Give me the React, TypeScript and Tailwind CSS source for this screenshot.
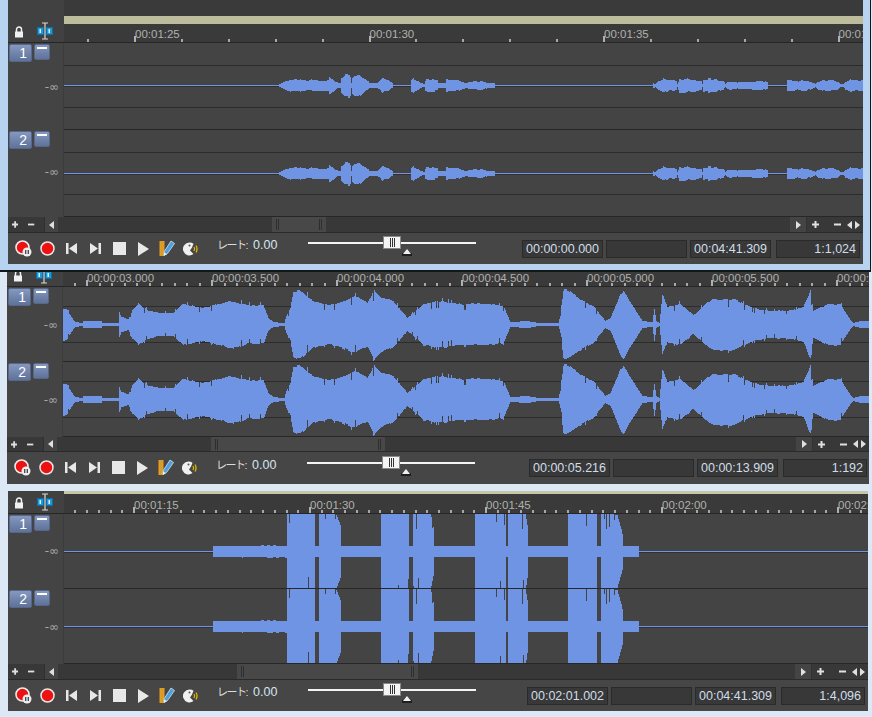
import React from "react";

type Pt = [number, number];
const BLUE = "#6f94e3";

const P1: Pt[] = [[278,0.5],[281,2],[285,4],[290,5.5],[300,5.5],[303,4],[308,4.5],[312,5],[320,4.5],[328,4.5],[329,8],[331,7],[335,3.5],[338,2],[340,2],[341,7],[345,11],[349,11],[350,9],[351,2],[352,8],[355,10],[360,9],[368,3.5],[369,2],[377,2],[378,3],[382,6],[388,5],[392,2],[393,0.5],[410,0.5],[411,5],[413,6],[418,3.5],[421,2],[424,1],[425,5],[430,5.5],[437,4.5],[438,2],[445,2],[446,7],[448,5],[458,4.5],[463,3],[467,2],[468,3],[475,3.5],[482,3.5],[487,2],[494,2],[495,0.5],
[652,0.5],[653,2],[655,1],[657,3.5],[663,6],[670,4.5],[676,4.5],[677,1],[679,6],[684,6],[695,5],[701,4.5],[702,1],[703,6],[708,6],[716,5],[723,3.5],[725,1],[727,3.5],[733,3.5],[737,2],[738,3],[749,3],[752,3.5],[760,4.5],[767,3],[768,0.5],[786,0.5],[787,4.5],[794,4.5],[797,3.5],[800,5],[806,4.5],[811,3],[815,1],[817,3],[822,5],[832,4.5],[838,3],[840,1],[843,1],[845,3.5],[850,5],[863,4.5]];
const P2: Pt[] = [[63,16],[66,15],[70,9],[73,4],[75,2],[82,1],[83,3],[101,3],[102,1],[118,1],[119,12],[121,7],[128,5],[132,14],[138,20],[147,14],[160,11],[173,11],[182,20],[193,18],[203,16],[217,20],[233,23],[247,19],[263,19],[268,6],[273,2],[284,1],[286,8],[290,16],[293,32],[300,34],[313,23],[327,19],[340,22],[353,28],[367,22],[374,34],[380,27],[393,23],[407,6],[423,20],[440,23],[460,20],[487,20],[503,18],[510,2],[527,3],[538,1],[558,1],[560,8],[563,34],[568,34],[580,25],[593,18],[605,3],[610,6],[620,30],[623,34],[630,22],[642,3],[652,2],[654,16],[656,3],[659,1],[662,30],[667,17],[680,20],[693,9],[707,22],[713,25],[733,25],[753,16],[770,13],[793,14],[803,17],[810,34],[813,13],[827,20],[840,20],[850,4],[853,1],[860,3],[869,3]];
const P3: Pt[] = [[213,5],[286,5.5],[287,39],[314,39],[315,5],[318,5],[319,39],[335,39],[340,26],[341,5],[380,5],[381,39],[408,39],[409,5],[412,5],[413,39],[430,39],[433,24],[434,5],[474,5],[475,39],[505,39],[506,5],[507,5],[508,39],[525,39],[527,26],[528,5],[567,5],[568,39],[596,39],[597,5],[600,5],[601,39],[617,36],[622,18],[623,5],[638,5]];

function ampAt(pts: Pt[], x: number) {
  if (x < pts[0][0] || x > pts[pts.length - 1][0]) return 0;
  for (let i = 1; i < pts.length; i++) {
    const [x0, a0] = pts[i - 1];
    const [x1, a1] = pts[i];
    if (x <= x1) return a0 + ((a1 - a0) * (x - x0)) / Math.max(1, x1 - x0);
  }
  return 0;
}

function wavePath(pts: Pt[], c: number, x0: number, x1: number, mode: number) {
  let seed = 7919;
  const rnd = () => {
    seed = (seed * 16807) % 2147483647;
    return seed / 2147483647;
  };
  let d = "";
  let hold1 = 0.5, hold2 = 0.5;
  for (let x = x0; x < x1; x++) {
    const a = ampAt(pts, x);
    const r1 = rnd(), r2 = rnd(), r3 = rnd();
    if (x % 3 === 0) { hold1 = r1; hold2 = r2; }
    if (a <= 0.6) continue;
    let up = a, dn = a;
    if (mode === 1) {
      up = a * (0.85 + 0.3 * hold1);
      dn = a * (0.85 + 0.3 * hold2);
    } else if (mode === 2) {
      up = a * (0.96 + 0.07 * hold1);
      dn = a * (0.96 + 0.07 * hold2);
      if (a > 9 && r3 < 0.045) { up = a * 0.7; dn = a * 1.12; }
      else if (a > 9 && r3 > 0.955) { up = a * 1.14; dn = a * 0.72; }
    } else {
      up = a > 20 ? a : a * (0.94 + 0.12 * hold1);
      dn = a > 20 ? a : a * (0.94 + 0.12 * hold2);
      if (a > 20 && r3 < 0.07) up = a * (0.55 + 0.3 * r1);
      if (a > 20 && r3 > 0.96) dn = a * (0.6 + 0.3 * r2);
    }
    d += `M${x + 0.5} ${Math.round(c - up)}V${Math.round(c + dn) + 1}`;
  }
  return d;
}

function Lock() {
  return (
    <svg width="10" height="12" viewBox="0 0 10 12">
      <path d="M2.5 6V3.5a2.5 2.5 0 0 1 5 0V6" fill="none" stroke="#f0f0f0" strokeWidth="1.5" />
      <rect x="1" y="5.5" width="8" height="6" fill="#f0f0f0" />
    </svg>
  );
}

function IBeam() {
  return (
    <svg width="16" height="18" viewBox="0 0 16 18">
      <rect x="0.5" y="5.5" width="6" height="7" fill="#1d9ad6" stroke="#0d6ea8" />
      <rect x="9.5" y="5.5" width="6" height="7" fill="#1d9ad6" stroke="#0d6ea8" />
      <rect x="2.5" y="7" width="1.5" height="4" fill="#d8f0ff" />
      <rect x="11.5" y="7" width="1.5" height="4" fill="#d8f0ff" />
      <path d="M5 1h6M5 17h6M8 1v16" fill="none" stroke="#d8d8d8" strokeWidth="1.2" />
    </svg>
  );
}

function Transport() {
  return (
    <>
      <div className="flex w-[24px] justify-center">
        <svg width="17" height="17" viewBox="0 0 17 17">
          <circle cx="7.5" cy="7.5" r="6.5" fill="#ee1111" stroke="#eeeeee" strokeWidth="1.6" />
          <circle cx="12" cy="12" r="4.5" fill="#eeeeee" />
          <path d="M10.7 10v4M13.3 10v4" stroke="#444" strokeWidth="1.3" />
        </svg>
      </div>
      <div className="flex w-[24px] justify-center">
        <svg width="15" height="15" viewBox="0 0 15 15">
          <circle cx="7.5" cy="7.5" r="6.5" fill="#ee1111" stroke="#e8e8e8" strokeWidth="1.5" />
        </svg>
      </div>
      <div className="flex w-[24px] justify-center">
        <svg width="11" height="11" viewBox="0 0 11 11">
          <rect width="2.5" height="11" fill="#e8e8e8" />
          <path d="M11 0v11L3 5.5z" fill="#e8e8e8" />
        </svg>
      </div>
      <div className="flex w-[24px] justify-center">
        <svg width="11" height="11" viewBox="0 0 11 11">
          <rect x="8.5" width="2.5" height="11" fill="#e8e8e8" />
          <path d="M0 0v11L8 5.5z" fill="#e8e8e8" />
        </svg>
      </div>
      <div className="flex w-[24px] justify-center">
        <div className="h-[13px] w-[13px] bg-[#e8e8e8]" />
      </div>
      <div className="flex w-[24px] justify-center">
        <svg width="12" height="14" viewBox="0 0 12 14">
          <path d="M1 0v14L12 7z" fill="#e8e8e8" />
        </svg>
      </div>
      <div className="flex w-[24px] justify-center">
        <svg width="16" height="17" viewBox="0 0 16 17">
          <path d="M0.5 1h2v15h-2zM3.5 1h2v15h-2z" fill="#f09a18" />
          <path d="M2.5 1h1v15h-1z" fill="#f6d040" />
          <path d="M12 1l3.5 2.5-7 10-3.5 2 .3-4z" fill="#4f9fdc" stroke="#d0e8f8" strokeWidth="0.8" />
          <path d="M5 15.5l.3-3 2.6 1.8z" fill="#f4f4f4" />
        </svg>
      </div>
      <div className="flex w-[24px] justify-center">
        <svg width="16" height="14" viewBox="0 0 16 14">
          <path d="M6.5 0.5a6.5 6.5 0 1 0 4 11.6L7 8.5 9 5.5 10.5 1.8A6.5 6.5 0 0 0 6.5 0.5z" fill="#f0f0f0" />
          <circle cx="6.5" cy="3.5" r="1" fill="#555" />
          <path d="M11 5c.8 1.2.8 2.8 0 4M13 3.5c1.2 2 1.2 5 0 7" fill="none" stroke="#e0b800" strokeWidth="1.3" />
        </svg>
      </div>
    </>
  );
}

type TrackCfg = { n: string; h: string; mt: string };
type PanelCfg = {
  left: number;
  width: string;
  top: number;
  headerH: string;
  topArea: React.ReactNode;
  rulerH: number;
  rulerStart: number;
  major: number;
  minors: number;
  labels: string[];
  tracks: { cfg: TrackCfg; y: number; h: number; c: number; lines: number[] }[];
  pts: Pt[];
  mode: number;
  thumbMl: string;
  thumbW: string;
  boxMl: string;
  times: string[];
  transportH: string;
  scrollH: string;
  outer: string;
  x1: number;
  textMt: string;
  sliderMt: string;
};

function Ruler({ p }: { p: PanelCfg }) {
  const x0 = p.left + 56;
  const w = p.x1 - x0;
  const ticks: React.ReactNode[] = [];
  const step = p.major / p.minors;
  for (let i = -p.minors * 2; i < p.minors * 12; i++) {
    const x = p.rulerStart + i * step;
    if (x < x0 || x >= p.x1) continue;
    const maj = i % p.minors === 0;
    ticks.push(
      <rect key={i} x={Math.round(x)} y={p.rulerH - (maj ? 6 : 3)} width="2" height={maj ? 6 : 3} fill={maj ? "#b0b0b0" : "#a8a8a8"} />
    );
  }
  return (
    <div className="relative overflow-hidden bg-[#3a3a3a]" style={{ height: p.rulerH, width: w }}>
      <svg className="absolute left-0 top-0" width={w} height={p.rulerH} viewBox={`${x0} 0 ${w} ${p.rulerH}`}>
        {ticks}
      </svg>
      {p.labels.map((l, i) => (
        <span
          key={l}
          className="absolute bottom-[1px] whitespace-nowrap text-[11.5px] leading-[14px] text-[#b0b1ad]"
          style={{ left: p.rulerStart + i * p.major - x0 + 1 }}
        >
          {l}
        </span>
      ))}
    </div>
  );
}

function Panel({ p }: { p: PanelCfg }) {
  const x0 = p.left + 56;
  const w = p.x1 - x0;
  return (
    <div className={p.outer}>
      <div className={p.width + " flex flex-col bg-[#444444]"}>
        <div className={p.headerH + " flex border-b border-[#262626]"}>
          <div className="flex w-[56px] shrink-0 items-end gap-[13px] overflow-hidden bg-[#414141] pb-[2px] pl-[6px]">
            <div className="mb-[2px]"><Lock /></div>
            <IBeam />
          </div>
          <div className="flex flex-1 flex-col justify-end overflow-hidden">
            {p.topArea}
            <Ruler p={p} />
          </div>
        </div>
        {p.tracks.map((t) => (
          <div key={t.cfg.n} className={t.cfg.h + " flex overflow-hidden"}>
            <div className="flex w-[56px] shrink-0 flex-col border-r border-[#3c3c3c] bg-[#444444]">
              <div className="mt-[1px] flex gap-[2px] pl-[1px]">
                <div className="flex h-[18px] w-[23px] items-center justify-end rounded-[2px] border border-[#56678a] bg-gradient-to-b from-[#8498c0] to-[#5f7299] pr-[4px] text-[14px] leading-none text-white">
                  {t.cfg.n}
                </div>
                <div className="flex h-[16px] w-[16px] justify-center rounded-[2px] border border-[#56678a] bg-gradient-to-b from-[#8498c0] to-[#5f7299] pt-[2px]">
                  <div className="h-[2px] w-[10px] bg-white" />
                </div>
              </div>
              <div className={t.cfg.mt + " flex justify-end pr-[4px] font-['DejaVu_Sans',sans-serif] text-[12px] leading-[14px] text-[#a8a8a8]"}>-∞</div>
            </div>
            <svg className="block" width={w} height={t.h} viewBox={`${x0} ${t.y} ${w} ${t.h}`}>
              {t.lines.map((y) => (
                <rect key={y} x={x0} y={y} width={w} height="1" fill="#2c2c2c" />
              ))}
              <rect x={x0} y={t.c} width={w} height="1" fill={BLUE} />
              <rect x={x0} y={t.c + 1} width={w} height="1" fill="#303030" />
              <path d={wavePath(p.pts, t.c, x0, p.x1, p.mode)} stroke={BLUE} strokeWidth="1" fill="none" shapeRendering="crispEdges" />
              <rect x={x0} y={t.y + t.h - 1} width={w} height="1" fill="#272727" />
            </svg>
          </div>
        ))}
        <div className={p.scrollH + " flex items-stretch border-b border-[#2a2a2a] bg-[#383838]"}>
          <div className="flex w-[50px] shrink-0 items-center">
            <svg className="ml-[4px]" width="7" height="7" viewBox="0 0 7 7"><path d="M3.5 0v7M0 3.5h7" stroke="#e0e0e0" strokeWidth="2" /></svg>
            <svg className="ml-[10px]" width="7" height="7" viewBox="0 0 7 7"><path d="M0 3.5h7" stroke="#e0e0e0" strokeWidth="2" /></svg>
            <div className="ml-[9px] flex h-full w-[16px] items-center justify-center border-l border-[#303030] bg-[#444444]">
              <svg width="5" height="8" viewBox="0 0 5 8"><path d="M5 0v8L0 4z" fill="#e0e0e0" /></svg>
            </div>
          </div>
          <div className={p.thumbMl + " " + p.thumbW + " flex items-center justify-between bg-[#484848] px-[4px]"}>
            <div className="h-[11px] w-[3px] border-x border-[#2e2e2e]" />
            <div className="h-[11px] w-[3px] border-x border-[#2e2e2e]" />
          </div>
          <div className="flex-1" />
          <div className="flex w-[73px] shrink-0 items-center">
            <div className="flex h-full w-[17px] items-center justify-center border-r border-[#333333] bg-[#444444]">
              <svg width="5" height="8" viewBox="0 0 5 8"><path d="M0 0v8l5-4z" fill="#e0e0e0" /></svg>
            </div>
            <svg className="ml-[5px]" width="7" height="7" viewBox="0 0 7 7"><path d="M3.5 0v7M0 3.5h7" stroke="#e0e0e0" strokeWidth="2" /></svg>
            <svg className="ml-[15px]" width="7" height="7" viewBox="0 0 7 7"><path d="M0 3.5h7" stroke="#e0e0e0" strokeWidth="2" /></svg>
            <svg className="ml-[6px]" width="13" height="8" viewBox="0 0 13 8"><path d="M5 0v8L0 4zM8 0v8l5-4z" fill="#e0e0e0" /></svg>
          </div>
        </div>
        <div className={p.transportH + " flex items-start bg-[#464646]"}>
          <div className="mt-[7px] flex items-center pl-[3px]"><Transport /></div>
          <div className={p.textMt + " ml-[14px] flex w-[91px] items-center whitespace-nowrap leading-[16px]"}>
            <span className="w-[36px] text-[11px] tracking-[-1.5px] text-[#dcdcdc]">レート:</span>
            <span className="text-[12.5px] text-[#d4e6f2]">0.00</span>
          </div>
          <div className={p.sliderMt + " relative h-[2px] w-[168px] bg-[#f4f4f4]"}>
            <div className="absolute left-[75px] top-[-6px] flex h-[13px] w-[18px] items-center justify-center gap-[1px] border border-[#888888] bg-[#f4f4f4]">
              <div className="h-[9px] w-[1px] bg-[#333333]" />
              <div className="h-[9px] w-[1px] bg-[#333333]" />
              <div className="h-[9px] w-[1px] bg-[#333333]" />
            </div>
            <svg className="absolute left-[94px] top-[7px]" width="10" height="7" viewBox="0 0 10 7">
              <rect y="4" width="10" height="3" fill="#1e1e1e" />
              <path d="M5 0l4 5H1z" fill="#f0f0f0" />
            </svg>
          </div>
          <div className={p.boxMl + " mt-[7px] flex text-[12.5px] leading-[16px] text-[#cfdde8]"}>
            <div className="h-[18px] w-[81px] border border-[#2a2a2a] bg-[#383838] pl-[3px]">{p.times[0]}</div>
            <div className="ml-[3px] h-[18px] w-[81px] border border-[#2a2a2a] bg-[#383838]" />
            <div className="ml-[3px] h-[18px] w-[81px] border border-[#2a2a2a] bg-[#383838] pl-[3px]">{p.times[1]}</div>
            <div className="ml-[5px] h-[18px] w-[84px] border border-[#2a2a2a] bg-[#383838] pr-[3px] text-right">{p.times[2]}</div>
          </div>
        </div>
      </div>
    </div>
  );
}

const FONT = "font-['Liberation_Sans','Noto_Sans_CJK_JP',sans-serif]";

const panels: PanelCfg[] = [
  {
    left: 8, x1: 863, width: "w-[855px]", top: 0,
    outer: "h-[272px] w-[871px] border-b-[2px] border-r border-b-[#10181c] border-r-[#10181c] bg-[#b8d3ef] pl-[8px]",
    headerH: "h-[43px]",
    topArea: (
      <>
        <div className="h-[16px] shrink-0 bg-[#3a3a3a]" />
        <div className="h-[8px] shrink-0 bg-[#bdbd9e]" />
      </>
    ),
    rulerH: 18, rulerStart: 134, major: 234.5, minors: 5,
    labels: ["00:01:25", "00:01:30", "00:01:35", "00:01:40"],
    tracks: [
      { cfg: { n: "1", h: "h-[87px]", mt: "mt-[18px]" }, y: 43, h: 87, c: 85, lines: [65, 107] },
      { cfg: { n: "2", h: "h-[87px]", mt: "mt-[16px]" }, y: 130, h: 87, c: 173, lines: [152, 194] },
    ],
    pts: P1, mode: 1,
    thumbMl: "ml-[214px]", thumbW: "w-[54px]",
    boxMl: "ml-[46px]", times: ["00:00:00.000", "00:04:41.309", "1:1,024"],
    scrollH: "h-[16px]", transportH: "h-[31px]",
    textMt: "mt-[4px]", sliderMt: "mt-[9px]",
  },
  {
    left: 7, x1: 869, width: "w-[862px]", top: 272,
    outer: "h-[219px] w-[872px] bg-[#dce8f5] pl-[7px]",
    headerH: "h-[15px]",
    topArea: null,
    rulerH: 14, rulerStart: 86, major: 125, minors: 10,
    labels: ["00:00:03.000", "00:00:03.500", "00:00:04.000", "00:00:04.500", "00:00:05.000", "00:00:05.500", "00:00:06.000"],
    tracks: [
      { cfg: { n: "1", h: "h-[75px]", mt: "mt-[12px]" }, y: 287, h: 75, c: 324, lines: [306, 342] },
      { cfg: { n: "2", h: "h-[75px]", mt: "mt-[12px]" }, y: 362, h: 75, c: 399, lines: [381, 417] },
    ],
    pts: P2, mode: 2,
    thumbMl: "ml-[154px]", thumbW: "w-[174px]",
    boxMl: "ml-[54px]", times: ["00:00:05.216", "00:00:13.909", "1:192"],
    scrollH: "h-[15px]", transportH: "h-[32px]",
    textMt: "mt-[5px]", sliderMt: "mt-[10px]",
  },
  {
    left: 8, x1: 868, width: "w-[860px]", top: 491,
    outer: "h-[226px] w-[872px] bg-[#dce8f5] pl-[8px]",
    headerH: "h-[23px]",
    topArea: <div className="h-[3px] shrink-0 bg-[#c6c6a8]" />,
    rulerH: 19, rulerStart: 133, major: 176, minors: 15,
    labels: ["00:01:15", "00:01:30", "00:01:45", "00:02:00", "00:02:15"],
    tracks: [
      { cfg: { n: "1", h: "h-[75px]", mt: "mt-[11px]" }, y: 514, h: 75, c: 551, lines: [] },
      { cfg: { n: "2", h: "h-[75px]", mt: "mt-[12px]" }, y: 589, h: 75, c: 626, lines: [] },
    ],
    pts: P3, mode: 3,
    thumbMl: "ml-[179px]", thumbW: "w-[181px]",
    boxMl: "ml-[51px]", times: ["00:02:01.002", "00:04:41.309", "1:4,096"],
    scrollH: "h-[16px]", transportH: "h-[31px]",
    textMt: "mt-[4px]", sliderMt: "mt-[9px]",
  },
];

export default function App() {
  return (
    <div className={FONT + " h-[717px] w-[872px] overflow-hidden bg-[#dce8f5]"}>
      {panels.map((p) => (
        <Panel key={p.top} p={p} />
      ))}
    </div>
  );
}
